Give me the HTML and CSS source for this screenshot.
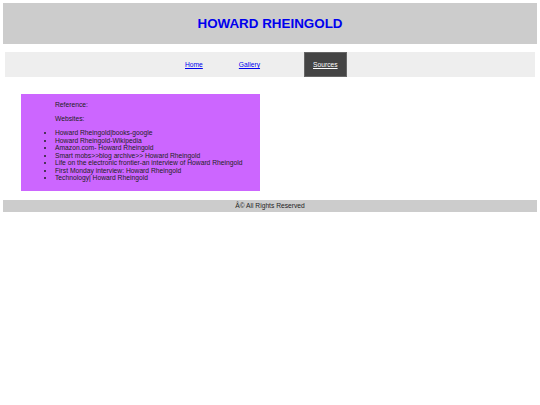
FILE: index.html
```html
<!DOCTYPE html>
<html lang="en">
<head>
<meta charset="utf-8">
<title>Howard Rheingold - Sources</title>
<link rel="stylesheet" href="styles.css">
</head>
<body>
<header class="site-header">
  <h1 class="site-title">HOWARD RHEINGOLD</h1>
</header>
<nav class="main-nav">
  <ul class="nav-list">
    <li class="nav-item"><a class="nav-link" href="#">Home</a></li>
    <li class="nav-item nav-item-gallery"><a class="nav-link" href="#">Gallery</a></li>
    <li class="nav-item nav-item-active"><a class="nav-link" href="#">Sources</a></li>
  </ul>
</nav>
<main class="content">
  <section class="sources-box">
    <p class="sources-label">Reference:</p>
    <p class="sources-label">Websites:</p>
    <ul class="sources-list">
      <li>Howard Rheingold|books-google</li>
      <li>Howard Rheingold-Wikipedia</li>
      <li>Amazon.com- Howard Rheingold</li>
      <li>Smart mobs&gt;&gt;blog archive&gt;&gt; Howard Rheingold</li>
      <li>Life on the electronic frontier-an interview of Howard Rheingold</li>
      <li>First Monday interview: Howard Rheingold</li>
      <li>Technology| Howard Rheingold</li>
    </ul>
  </section>
</main>
<footer class="site-footer">Â© All Rights Reserved</footer>
</body>
</html>
```

FILE: styles.css
```css
html, body {
  margin: 0;
  padding: 0;
  background: #ffffff;
}

body {
  padding: 3px;
  font-family: "Liberation Sans", Arial, sans-serif;
  font-size: 6.73px;
  color: #222;
}

.site-header {
  background: #cccccc;
  height: 41px;
  display: flex;
  align-items: center;
  justify-content: center;
}

.site-title {
  margin: 0;
  font-size: 13.4px;
  font-weight: bold;
  color: #0000ee;
}

.main-nav {
  margin: 8px 2px 0;
  height: 25px;
  background: #eeeeee;
}

.nav-list {
  list-style: none;
  margin: 0;
  padding: 0 0 0 171px;
  height: 100%;
  display: flex;
}

.nav-item {
  display: flex;
  align-items: center;
  padding: 0 9px;
  height: 100%;
  box-sizing: border-box;
}

.nav-item-gallery {
  margin-left: 18px;
}

.nav-item-active {
  margin-left: 35px;
  background: #444444;
  border: 1px solid #666666;
  padding: 0 8px;
}

.nav-link {
  color: #0000ee;
  font-size: 6.7px;
}

.nav-item-active .nav-link {
  color: #ffffff;
}

.content {
  padding: 17px 0 0 18px;
}

.sources-box {
  width: 239px;
  background: #cc66ff;
  padding: 1px 0 2.5px 34px;
  box-sizing: border-box;
  color: #222;
}

.sources-label {
  margin: 6.4px 0;
  line-height: 7.5px;
}

.sources-list {
  margin: 6.4px 0;
  padding: 0;
  line-height: 7.5px;
}

.site-footer {
  margin-top: 9.5px;
  background: #cccccc;
  height: 12px;
  line-height: 12px;
  text-align: center;
  color: #222;
  font-size: 6.7px;
}
```
